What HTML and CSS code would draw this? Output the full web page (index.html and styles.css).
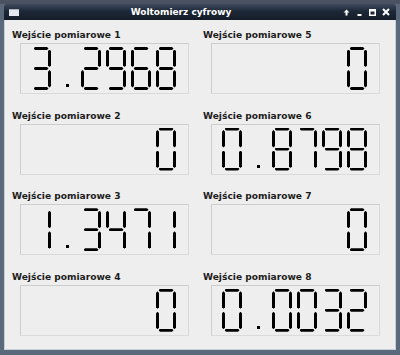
FILE: index.html
```html
<!DOCTYPE html>
<html lang="pl">
<head>
<meta charset="utf-8">
<title>Woltomierz cyfrowy</title>
<link rel="stylesheet" href="styles.css">
</head>
<body>
<div class="window">
  <div class="titlebar">
    <span class="app-icon"></span>
    <span class="title">Woltomierz cyfrowy</span>
    <div class="controls">
      <svg class="ctl" width="7" height="7" viewBox="0 0 7 7"><path d="M3.5 0.5 L6.5 3.5 L4.5 3.5 L4.5 6.5 L2.5 6.5 L2.5 3.5 L0.5 3.5 Z" fill="#fff"/></svg>
      <svg class="ctl" width="7" height="7" viewBox="0 0 7 7"><rect x="1.5" y="5" width="4" height="2" fill="#fff"/></svg>
      <svg class="ctl" width="7" height="7" viewBox="0 0 7 7"><rect x="0.75" y="0.75" width="5.5" height="5.5" fill="none" stroke="#fff" stroke-width="1.5"/><rect x="0.5" y="0.5" width="6" height="2" fill="#fff"/></svg>
      <svg class="ctl" width="8" height="8" viewBox="0 0 8 8"><path d="M1 1 L7 7 M7 1 L1 7" stroke="#fff" stroke-width="2"/></svg>
    </div>
  </div>
  <div class="content">
    <div class="grid">
      <section class="field"><h2 class="label">Wejście pomiarowe 1</h2><div class="lcd" data-value="3.2968"><span class="lcd-text">3.2968</span></div></section>
      <section class="field"><h2 class="label">Wejście pomiarowe 2</h2><div class="lcd" data-value="0"><span class="lcd-text">0</span></div></section>
      <section class="field"><h2 class="label">Wejście pomiarowe 3</h2><div class="lcd" data-value="1.3471"><span class="lcd-text">1.3471</span></div></section>
      <section class="field"><h2 class="label">Wejście pomiarowe 4</h2><div class="lcd" data-value="0"><span class="lcd-text">0</span></div></section>
      <section class="field"><h2 class="label">Wejście pomiarowe 5</h2><div class="lcd" data-value="0"><span class="lcd-text">0</span></div></section>
      <section class="field"><h2 class="label">Wejście pomiarowe 6</h2><div class="lcd" data-value="0.8798"><span class="lcd-text">0.8798</span></div></section>
      <section class="field"><h2 class="label">Wejście pomiarowe 7</h2><div class="lcd" data-value="0"><span class="lcd-text">0</span></div></section>
      <section class="field"><h2 class="label">Wejście pomiarowe 8</h2><div class="lcd" data-value="0.0032"><span class="lcd-text">0.0032</span></div></section>
    </div>
  </div>
</div>
<script src="script.js"></script>
</body>
</html>
```

FILE: styles.css
```css
* { box-sizing: border-box; }
html, body {
  margin: 0;
  width: 400px;
  height: 355px;
  overflow: hidden;
}
body {
  background: linear-gradient(#4b5362 0, #4b5362 4px, #5a687c 4px);
  font-family: "DejaVu Sans", "Liberation Sans", sans-serif;
}
.window {
  margin: 4px 4px 0 4px;
  height: 346px;
  display: flex;
  flex-direction: column;
}
.titlebar {
  height: 16px;
  flex: none;
  display: flex;
  align-items: center;
  padding: 0 6px 0 5px;
  background: linear-gradient(#3e4b5d, #1d2837 45%, #141c28);
  border-radius: 3px 3px 0 0;
}
.app-icon {
  width: 10px;
  height: 7px;
  background: linear-gradient(#aab2bd 0, #aab2bd 1px, #e4e8ee 1px);
  flex: none;
}
.title {
  flex: 1;
  text-align: center;
  color: #fff;
  font-weight: bold;
  font-size: 9px;
  line-height: 16px;
}
.controls {
  display: flex;
  align-items: center;
  gap: 6px;
}
.ctl { display: block; }
.content {
  flex: 1;
  background: #eeeeee;
  border: 1px solid #c9ced6;
  border-top: none;
  padding: 8px 0 0 7px;
}
.grid {
  display: grid;
  grid-template-columns: 177px 177px;
  grid-template-rows: repeat(4, 66px);
  grid-auto-flow: column;
  column-gap: 14px;
  row-gap: 14.6px;
}
.field { margin: 0; }
.label {
  margin: 0;
  height: 15px;
  font-size: 9.1px;
  line-height: 14px;
  font-weight: bold;
  color: #1c1c1c;
}
.lcd {
  margin-left: 8px;
  height: 51px;
  border: 1px solid #cdcdcd;
  border-right-color: #dadada;
  border-bottom-color: #dadada;
  display: flex;
  justify-content: flex-end;
  padding: 3px 7px 3px 0;
  position: relative;
}
.lcd-text {
  position: absolute;
  left: 4px;
  right: 8px;
  top: 3px;
  text-align: right;
  font-family: "DejaVu Sans Mono", monospace;
  font-size: 30px;
  line-height: 43px;
  color: transparent;
}
.cell {
  width: 25px;
  height: 43px;
  flex: none;
  position: relative;
}
.dg {
  display: block;
  width: 20px;
  height: 43px;
  position: relative;
}
.seg {
  position: absolute;
  background: #000;
  display: none;
}
.h {
  height: 3px;
  width: 15px;
  left: 2.5px;
  clip-path: polygon(0 50%, 1.5px 0, calc(100% - 1.5px) 0, 100% 50%, calc(100% - 1.5px) 100%, 1.5px 100%);
}
.v {
  width: 3px;
  height: 17.5px;
  clip-path: polygon(50% 0, 100% 1.5px, 100% calc(100% - 1.5px), 50% 100%, 0 calc(100% - 1.5px), 0 1.5px);
}
.sa { top: 0; }
.sg { top: 20px; }
.sd { top: 40px; }
.sb { left: 17px; top: 2.5px; }
.sf { left: 0; top: 2.5px; }
.sc { left: 17px; top: 23px; }
.se { left: 0; top: 23px; }
.on { display: block; }
.dot {
  position: absolute;
  left: 10px;
  bottom: 3px;
  width: 3px;
  height: 3px;
  background: #000;
}
```

FILE: script.js
```js
(function () {
  var map = {
    '0': 'abcdef', '1': 'bc', '2': 'abged', '3': 'abgcd', '4': 'fgbc',
    '5': 'afgcd', '6': 'afgedc', '7': 'abc', '8': 'abcdefg', '9': 'abcdfg'
  };
  var segs = ['a', 'b', 'c', 'd', 'e', 'f', 'g'];
  var horiz = { a: 1, d: 1, g: 1 };
  document.querySelectorAll('.lcd').forEach(function (lcd) {
    var val = lcd.getAttribute('data-value');
    val.split('').forEach(function (ch) {
      var cell = document.createElement('span');
      cell.className = 'cell';
      cell.setAttribute('aria-hidden', 'true');
      if (ch === '.') {
        var d = document.createElement('span');
        d.className = 'dot';
        cell.appendChild(d);
      } else {
        var dg = document.createElement('span');
        dg.className = 'dg';
        var lit = map[ch] || '';
        segs.forEach(function (s) {
          var e = document.createElement('i');
          e.className = 'seg s' + s + ' ' + (horiz[s] ? 'h' : 'v') + (lit.indexOf(s) >= 0 ? ' on' : '');
          dg.appendChild(e);
        });
        cell.appendChild(dg);
      }
      lcd.appendChild(cell);
    });
  });
})();
```
